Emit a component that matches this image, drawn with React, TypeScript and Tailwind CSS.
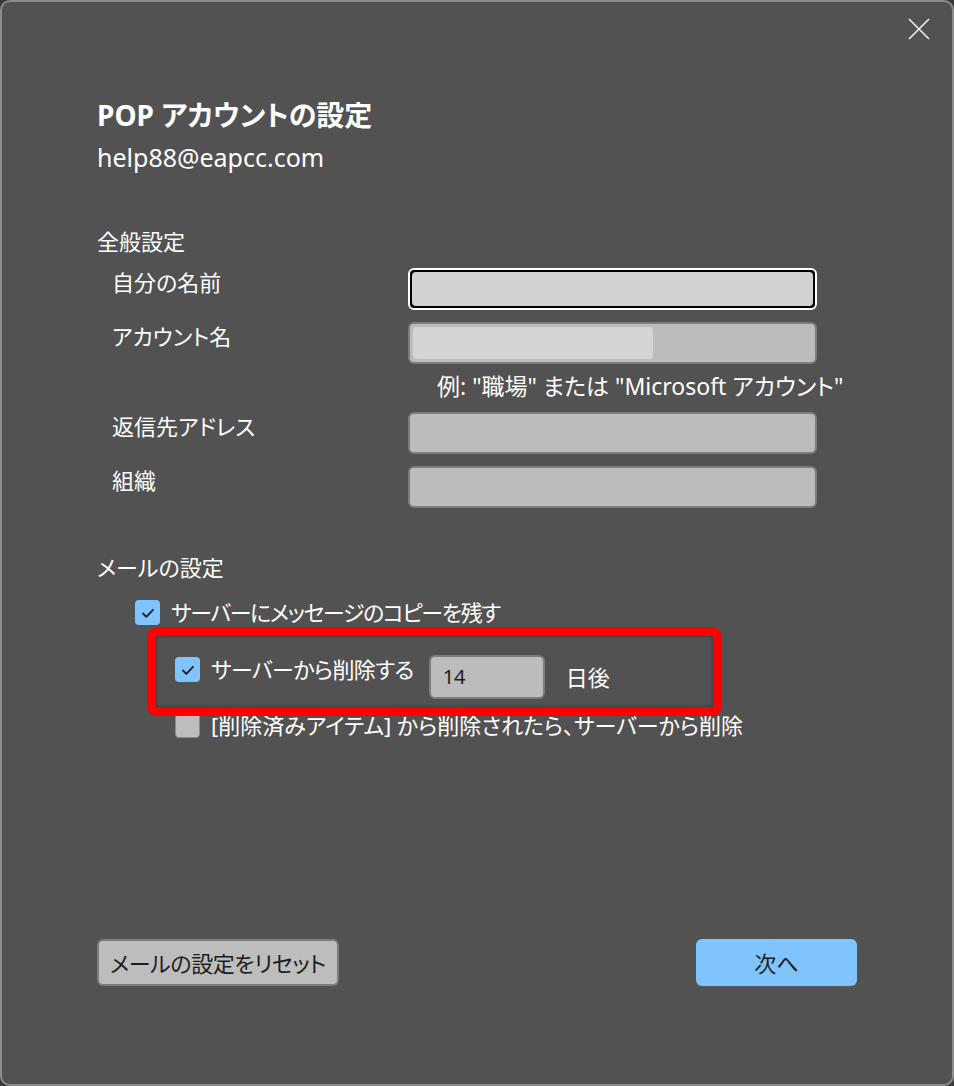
import React from "react"

const jp = { fontFamily: '"Noto Sans", "Noto Sans CJK JP", sans-serif' }

function Check({ checked }: { checked: boolean }) {
  if (!checked) {
    return <div className="w-[25px] h-[25px] shrink-0 rounded-[4px] bg-[#bdbdbd] border border-[#8a8a8a]" />
  }
  return (
    <div className="w-[25px] h-[25px] shrink-0 rounded-[4px] bg-[#80c4ff] flex items-center justify-center">
      <svg width="14" height="14" viewBox="0 0 14 14" fill="none">
        <path d="M2 7.5 L5.3 10.8 L12 3.8" stroke="#1c1c1c" strokeWidth="1.8" strokeLinecap="round" strokeLinejoin="round" />
      </svg>
    </div>
  )
}

function Field({ children, focused }: { children?: React.ReactNode; focused?: boolean }) {
  if (focused) {
    return (
      <div className="w-[409px] h-[42px] rounded-[6px] border-2 border-white p-[2px] bg-black">
        <div className="w-full h-full rounded-[4px] bg-[#d2d2d2]" />
      </div>
    )
  }
  return (
    <div className="w-[409px] h-[42px] rounded-[6px] border-2 border-[#7c7c7c] bg-[#bcbcbc] p-[3px]">
      {children}
    </div>
  )
}

export default function App() {
  return (
    <div className="w-[954px] h-[1086px] bg-[#3a3a3a]" style={jp}>
      <div className="relative w-full h-full rounded-[10px] border-2 border-[#8c8c8c] bg-[#525252] text-white [font-feature-settings:'palt']">
        <div className="flex justify-end pt-[16px] pr-[22px]">
          <svg width="22" height="22" viewBox="0 0 22 22" fill="none">
            <path d="M1 1 L21 21 M21 1 L1 21" stroke="#f0f0f0" strokeWidth="1.6" />
          </svg>
        </div>

        <div className="pl-[95px]">
          <h1 className="mt-[57px] text-[28px] leading-[36px] font-bold">POP アカウントの設定</h1>
          <p className="mt-[8px] text-[25px] leading-[32px]">help88@eapcc.com</p>

          <h2 className="mt-[53px] text-[22px] leading-[30px]">全般設定</h2>

          <div className="mt-[12px] grid grid-cols-[311px_409px] gap-y-[12px]">
            <div className="pl-[15px] text-[22px] leading-[30px] -mt-[1px]">自分の名前</div>
            <Field focused />

            <div className="pl-[15px] text-[22px] leading-[30px] -mt-[1px]">アカウント名</div>
            <div className="flex flex-col">
              <Field>
                <div className="w-[240px] h-full rounded-[4px] bg-[#d4d4d4]" />
              </Field>
              <div className="h-[36px]">
                <p className="mt-[7px] pl-[29px] text-[23px] leading-[30px] whitespace-nowrap">例: "職場" または "Microsoft アカウント"</p>
              </div>
            </div>

            <div className="pl-[15px] text-[22px] leading-[30px] -mt-[1px]">返信先アドレス</div>
            <Field />

            <div className="pl-[15px] text-[22px] leading-[30px] -mt-[1px]">組織</div>
            <Field />
          </div>

          <h2 className="mt-[44px] text-[22px] leading-[30px]">メールの設定</h2>

          <div className="mt-[18px] pl-[38px] flex flex-col">
            <div className="flex items-center gap-[11px] h-[25px]">
              <Check checked />
              <span className="text-[22px] leading-[30px] -mt-[1px] tracking-[-1.4px]">サーバーにメッセージのコピーを残す</span>
            </div>
            <div className="mt-[30px] pl-[40px] flex items-center h-[44px]">
              <div className="self-start flex items-center gap-[11px] h-[25px] mt-[2px]">
                <Check checked />
                <span className="text-[22px] leading-[30px] -mt-[1px] tracking-[-0.6px]">サーバーから削除する</span>
              </div>
              <div className="ml-[15px] w-[116px] h-[44px] rounded-[6px] border-2 border-[#7c7c7c] bg-[#bcbcbc] text-[#1c1c1c] text-[20px] leading-[40px] pl-[12px]">14</div>
              <span className="ml-[21px] text-[22px] leading-[30px]">日後</span>
            </div>
            <div className="mt-[14px] pl-[40px] flex items-center gap-[11px] h-[25px]">
              <Check checked={false} />
              <span className="text-[22px] leading-[30px] -mt-[1px]">[削除済みアイテム] から削除されたら、サーバーから削除</span>
            </div>
          </div>
        </div>

        <div className="absolute left-[145px] top-[625px] w-[575px] h-[89px] rounded-[10px] border-[9px] border-[#ff0000] shadow-[inset_0_0_3px_rgba(0,0,0,0.5)]" />

        <div className="absolute left-0 right-0 bottom-[98px] flex justify-between pl-[95px] pr-[95px]">
          <button className="w-[242px] h-[47px] rounded-[6px] border-2 border-[#7c7c7c] bg-[#bdbdbd] text-[#1c1c1c] text-[22px] leading-[30px] tracking-[-0.4px]">メールの設定をリセット</button>
          <button className="w-[161px] h-[47px] rounded-[6px] bg-[#80c4ff] text-[#1c1c1c] text-[22px] leading-[30px]">次へ</button>
        </div>
      </div>
    </div>
  )
}
